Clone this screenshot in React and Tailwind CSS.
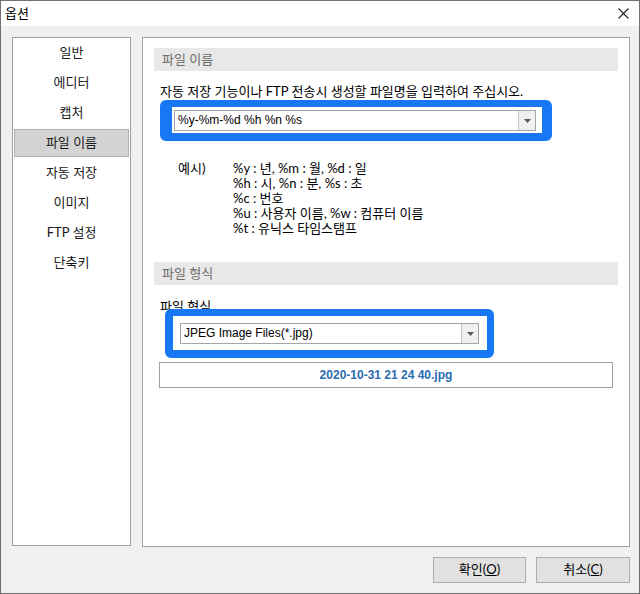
import React from "react";

const menu = ["일반", "에디터", "캡처", "파일 이름", "자동 저장", "이미지", "FTP 설정", "단축키"];

function Combo({ text, className }) {
  return (
    <div className={"flex h-[21px] border border-[#a5a5a5] bg-white " + className}>
      <div className="flex-1 flex items-center pl-[3px] leading-[15px] whitespace-nowrap text-[12px] font-['Liberation_Sans','Noto_Sans_CJK_KR',sans-serif]">{text}</div>
      <div className="w-[17px] border-l border-[#c4c4c4] bg-[#f0f0f0] flex items-center justify-center">
        <svg width="7" height="4" viewBox="0 0 7 4">
          <path d="M0 0 L7 0 L3.5 4 Z" fill="#5a5a5a" />
        </svg>
      </div>
    </div>
  );
}

export default function App() {
  return (
    <div className="w-[640px] h-[594px] border border-[#707070] bg-[#f0f0f0] flex flex-col overflow-hidden text-[13px] text-black font-['Lato','Noto_Sans_CJK_KR',sans-serif]">
      <div className="h-[25px] shrink-0 bg-white flex items-center justify-between pl-[4px] pr-[10px]">
        <span className="leading-[15px]">옵션</span>
        <svg width="11" height="11" viewBox="0 0 11 11">
          <path d="M0.5 0.5 L10.5 10.5 M10.5 0.5 L0.5 10.5" stroke="#222" strokeWidth="1.1" />
        </svg>
      </div>

      <div className="flex items-start gap-[11px] pl-[11px] pr-[9px] pt-[11px]">
        <div className="w-[119px] h-[509px] bg-white border border-[#a0a0a0] p-[1px] flex flex-col gap-[2px]">
          {menu.map((m) => (
            <div
              key={m}
              className={
                m === "파일 이름"
                  ? "h-[28px] flex items-center justify-center border border-[#b0b0b0] bg-[#d3d3d3] text-[#1a1a1a]"
                  : "h-[28px] flex items-center justify-center border border-transparent text-[#1a1a1a]"
              }
            >
              {m}
            </div>
          ))}
        </div>

        <div className="relative w-[488px] h-[510px] bg-white border border-[#a0a0a0] px-[11px] pt-[10px]">
          <div className="h-[23px] bg-[#e8e8e8] pl-[8px] flex items-center text-[#6d6d6d]">파일 이름</div>
          <div className="mt-[13px] pl-[6px] leading-[15px] whitespace-nowrap">
            자동 저장 기능이나 FTP 전송시 생성할 파일명을 입력하여 주십시오.
          </div>
          <Combo text="%y-%m-%d %h %n %s" className="mt-[11px] ml-[20px] w-[362px]" />

          <div className="mt-[30px] flex leading-[15px] whitespace-nowrap">
            <div className="w-[79px] pl-[24px]">예시)</div>
            <div className="flex flex-col">
              <span>%y : 년, %m : 월, %d : 일</span>
              <span>%h : 시, %n : 분, %s : 초</span>
              <span>%c : 번호</span>
              <span>%u : 사용자 이름, %w : 컴퓨터 이름</span>
              <span>%t : 유닉스 타임스탬프</span>
            </div>
          </div>

          <div className="mt-[26px] h-[23px] bg-[#e8e8e8] pl-[8px] flex items-center text-[#6d6d6d]">파일 형식</div>
          <div className="mt-[14px] pl-[6px] leading-[15px]">파일 형식</div>
          <Combo text="JPEG Image Files(*.jpg)" className="mt-[9px] ml-[26px] w-[299px]" />
          <div className="mt-[18px] ml-[5px] w-[454px] h-[26px] border border-[#a0a0a0] flex items-center justify-center font-bold text-[12px] font-['Liberation_Sans',sans-serif] text-[#2a6cb0]">
            2020-10-31 21 24 40.jpg
          </div>

          <div className="absolute left-[17px] top-[62px] w-[392px] h-[41px] border-l-[12px] border-t-[7px] border-r-[10px] border-b-[8px] border-[#1877f2] rounded-[6px]" />
          <div className="absolute left-[22px] top-[271px] w-[329px] h-[49px] border-l-[8px] border-t-[7px] border-r-[7px] border-b-[8px] border-[#1877f2] rounded-[6px]" />
        </div>
      </div>

      <div className="flex justify-end gap-[10px] pr-[9px] mt-[10px]">
        <div className="w-[93px] h-[26px] bg-[#e1e1e1] border border-[#adadad] flex items-center justify-center">
          확인(<span className="underline">O</span>)
        </div>
        <div className="w-[94px] h-[26px] bg-[#e1e1e1] border border-[#adadad] flex items-center justify-center">
          취소(<span className="underline">C</span>)
        </div>
      </div>
    </div>
  );
}
